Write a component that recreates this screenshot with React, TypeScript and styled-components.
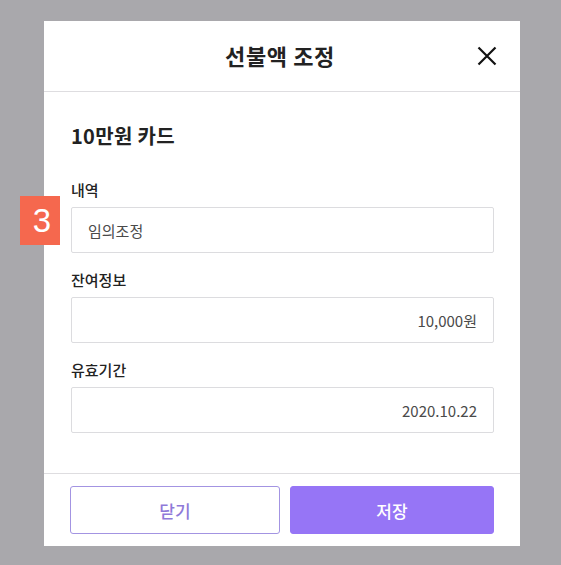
import React from "react";
import styled, { createGlobalStyle } from "styled-components";

const Global = createGlobalStyle`
  html, body { margin: 0; padding: 0; }
  body {
    background: #a9a8ac;
    font-family: "Noto Sans CJK KR", "Noto Sans", sans-serif;
    width: 561px;
    height: 565px;
    overflow: hidden;
  }
`;

const Page = styled.div`
  position: relative;
  width: 561px;
  height: 565px;
  padding: 21px 0 0 44px;
  box-sizing: border-box;
`;

const Modal = styled.div`
  width: 476px;
  background: #ffffff;
  display: flex;
  flex-direction: column;
`;

const Header = styled.div`
  height: 70px;
  border-bottom: 1px solid #dedde0;
  display: flex;
  align-items: center;
  justify-content: center;
  position: relative;
`;

const Title = styled.h1`
  margin: 0;
  font-size: 22px;
  font-weight: 700;
  color: #222;
  letter-spacing: 0.6px;
  margin-left: -4px;
  margin-top: -2px;
`;

const CloseBtn = styled.button`
  position: absolute;
  right: 22px;
  top: 24px;
  width: 22px;
  height: 22px;
  padding: 0;
  border: 0;
  background: none;
  display: flex;
  align-items: center;
  justify-content: center;
`;

const Body = styled.div`
  padding: 30px 26px 40px 27px;
  display: flex;
  flex-direction: column;
`;

const CardName = styled.h2`
  margin: 0 0 29px;
  font-size: 20px;
  line-height: 28px;
  font-weight: 700;
  color: #222;
  letter-spacing: 0.3px;
`;

const Field = styled.div<{ $first?: boolean }>`
  display: flex;
  flex-direction: column;
  gap: 6px;
  margin-top: ${(p) => (p.$first ? "0" : "16px")};
`;

const Label = styled.label`
  font-size: 15px;
  line-height: 22px;
  color: #222;
  font-weight: 500;
`;

const Box = styled.div<{ $align?: "left" | "right" }>`
  height: 46px;
  box-sizing: border-box;
  border: 1px solid #dcdcdf;
  border-radius: 2px;
  padding: 0 16px;
  display: flex;
  align-items: center;
  justify-content: ${(p) => (p.$align === "right" ? "flex-end" : "flex-start")};
  font-size: 15px;
  color: #4a4a4a;
`;

const Footer = styled.div`
  border-top: 1px solid #dedde0;
  padding: 12px 26px;
  display: grid;
  grid-template-columns: 210px 1fr;
  gap: 10px;
`;

const Button = styled.button<{ $primary?: boolean }>`
  height: 48px;
  border-radius: 3px;
  font-family: "Noto Sans CJK KR", "Noto Sans", sans-serif;
  font-size: 17px;
  font-weight: 500;
  cursor: pointer;
  border: 1.5px solid ${(p) => (p.$primary ? "#9675f6" : "#a394e2")};
  background: ${(p) => (p.$primary ? "#9675f6" : "#ffffff")};
  color: ${(p) => (p.$primary ? "#ffffff" : "#8f7ad9")};
`;

const Badge = styled.div`
  position: absolute;
  left: 20px;
  top: 196px;
  width: 40px;
  height: 49px;
  background: #f5684e;
  color: #fff;
  font-family: "Liberation Sans", Arial, sans-serif;
  font-size: 33px;
  line-height: 1;
  display: flex;
  align-items: center;
  justify-content: center;
  padding-left: 4px;
  box-sizing: border-box;
`;

export default function App() {
  return (
    <>
      <Global />
      <Page>
        <Modal>
          <Header>
            <Title>선불액 조정</Title>
            <CloseBtn aria-label="닫기">
              <svg width="20" height="20" viewBox="0 0 20 20">
                <path d="M1.5 1.5 L18.5 18.5 M18.5 1.5 L1.5 18.5" stroke="#111" strokeWidth="2.2" strokeLinecap="butt" />
              </svg>
            </CloseBtn>
          </Header>
          <Body>
            <CardName>10만원 카드</CardName>
            <Field $first>
              <Label>내역</Label>
              <Box>임의조정</Box>
            </Field>
            <Field>
              <Label>잔여정보</Label>
              <Box $align="right">10,000원</Box>
            </Field>
            <Field>
              <Label>유효기간</Label>
              <Box $align="right">2020.10.22</Box>
            </Field>
          </Body>
          <Footer>
            <Button>닫기</Button>
            <Button $primary>저장</Button>
          </Footer>
        </Modal>
        <Badge>3</Badge>
      </Page>
    </>
  );
}
